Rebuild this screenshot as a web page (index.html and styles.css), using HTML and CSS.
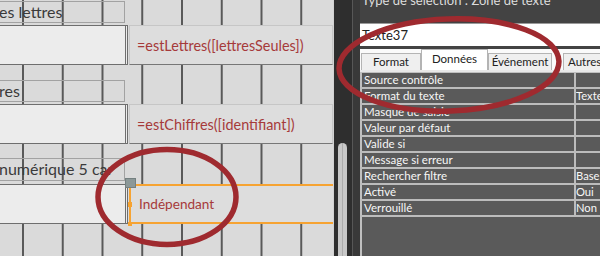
FILE: index.html
```html
<!DOCTYPE html>
<html lang="fr">
<head>
  <meta charset="UTF-8">
  <title>Propriétés - Texte37</title>
  <link rel="stylesheet" href="styles.css">
</head>
<body>

<div class="screen">

  <!-- Form design grid -->
  <div class="form-canvas">
    <div class="ctl-row first">
      <div class="ctl-label">es lettres</div>
      <div class="fields">
        <div class="text-box"></div>
        <div class="calc-box">=estLettres([lettresSeules])</div>
      </div>
    </div>

    <div class="ctl-row second">
      <div class="ctl-label">res</div>
      <div class="fields">
        <div class="text-box"></div>
        <div class="calc-box">=estChiffres([identifiant])</div>
      </div>
    </div>

    <div class="ctl-row third">
      <div class="ctl-label">numérique 5 car</div>
      <div class="fields">
        <div class="text-box"></div>
        <div class="calc-box selected">
          Indépendant
          <span class="handle move"></span>
          <span class="handle mid"></span>
          <span class="handle bottom"></span>
        </div>
      </div>
    </div>
  </div>

  <!-- Splitter with scrollbar -->
  <div class="splitter">
    <div class="track"><div class="thumb"></div></div>
    <div class="split-line"></div>
    <div class="split-rest"></div>
  </div>

  <!-- Property sheet -->
  <div class="props">
    <div class="props-title">Type de sélection : Zone de texte</div>
    <div class="props-name">Texte37</div>
    <div class="tabs">
      <div class="tab format">Format</div>
      <div class="tab active">Données</div>
      <div class="tab event">Événement</div>
      <div class="tab other">Autres</div>
    </div>
    <table class="props-grid">
      <colgroup><col class="name-col"><col></colgroup>
      <tr><td>Source contrôle</td><td></td></tr>
      <tr><td>Format du texte</td><td>Texte</td></tr>
      <tr><td>Masque de saisie</td><td></td></tr>
      <tr><td>Valeur par défaut</td><td></td></tr>
      <tr><td>Valide si</td><td></td></tr>
      <tr><td>Message si erreur</td><td></td></tr>
      <tr><td>Rechercher filtre</td><td>Base</td></tr>
      <tr><td>Activé</td><td>Oui</td></tr>
      <tr><td>Verrouillé</td><td>Non</td></tr>
    </table>
    <div class="props-empty"></div>
  </div>

  <!-- Hand-drawn highlight circles -->
  <svg class="marks" width="600" height="256" viewBox="0 0 600 256">
    <ellipse cx="449" cy="65" rx="110" ry="46" transform="rotate(-2 449 65)"/>
    <ellipse cx="167" cy="197" rx="69" ry="47.5"/>
  </svg>

</div>

</body>
</html>
```

FILE: styles.css
```css
body { margin: 0; width: 600px; height: 256px; overflow: hidden; background: #dadada; font-family: Lato, "Open Sans", sans-serif; }
.screen { display: flex; height: 256px; position: relative; }

/* form grid */
.form-canvas {
  width: 333px; flex: none; overflow: hidden;
  border-right: 1px solid #d2d2d2;
  background-color: #dadada;
  background-image: linear-gradient(to right, #595959 0, #595959 2px, transparent 2px);
  background-size: 39.75px 100%;
  background-position: 22px 0;
}
.ctl-row.first { margin-top: 1px; }
.ctl-row.second { margin-top: 15px; }
.ctl-row.third { margin-top: 14px; }
.ctl-label {
  width: 125px; height: 22px; box-sizing: border-box;
  border: 1px solid #a2a2a2; border-left: none;
  font-size: 16px; line-height: 20px; color: #3a3a3a;
  white-space: nowrap; overflow: hidden; text-indent: -1px;
}
.third .ctl-label { height: 23px; }
.fields { display: flex; height: 40px; margin-top: 2px; }
.third .fields { margin-top: 3px; }
.text-box {
  width: 128px; box-sizing: border-box; background: #ececec;
  border-top: 1px solid #6e6e6e; border-bottom: 1px solid #6e6e6e;
  border-right: 3px double #6e6e6e;
}
.calc-box {
  flex: 1; margin-left: 1px; position: relative;
  display: flex; align-items: center; padding-left: 7px;
  background: #dddddd; border: 1px solid #c6c6c6; border-bottom-color: #777;
  color: #a63a3a; font-size: 14.4px; white-space: nowrap;
}
.calc-box.selected {
  border: 2px solid #f6a332; border-right: none; padding-left: 8px; font-size: 13.6px;
}
.handle { position: absolute; }
.handle.move { left: -6px; top: -8px; width: 9px; height: 8px; background: #8c9898; border: 1px solid #748080; }
.handle.mid { left: -3px; top: 16px; width: 4px; height: 5px; background: #f6a332; }
.handle.bottom { left: -3px; bottom: -4px; width: 4px; height: 4px; background: #f6a332; }

/* splitter */
.splitter { width: 26px; flex: none; display: flex; background: #2e2e2e; }
.track { width: 18px; padding-top: 143px; box-sizing: border-box; }
.thumb {
  margin-left: 4px; width: 9px; height: 113px; border-radius: 5px 5px 0 0;
  background: #c8c8c8 linear-gradient(to right, transparent 4px, #ababab 4px, #ababab 5px, transparent 5px);
}
.split-line { width: 1px; background: #575757; }
.split-rest { width: 7px; background: #393939; }

/* property sheet */
.props { flex: 1; min-width: 0; background: #434343; display: flex; flex-direction: column; font-family: Lato, "Open Sans", sans-serif; }
.props-title { margin-top: -8px; height: 31px; padding-left: 2px; font-size: 13px; line-height: 16px; color: #dcdcdc; white-space: nowrap; }
.props-name { height: 23px; box-sizing: border-box; background: #fff; border-top: 1px solid #9a9a9a; padding-left: 2px; font-size: 13px; line-height: 22px; color: #222; }
.tabs { margin-top: 3px; height: 21px; background: #fafafa; display: flex; align-items: flex-end; padding-left: 1px; border-bottom: 2px solid #e8e8e8; }
.tab {
  flex: none; height: 17px; box-sizing: border-box; text-align: center;
  background: #efefef; border: 1px solid #b4b4b4; border-bottom: none;
  font-size: 11.5px; line-height: 16px; color: #222;
}
.tab.format { width: 60px; }
.tab.active { width: 67px; height: 21px; background: #fff; padding-top: 1px; }
.tab.event { width: 64px; }
.tab.other { width: 60px; margin-left: 11px; text-align: left; padding-left: 4px; }
.props-grid { width: 100%; table-layout: fixed; border-collapse: collapse; border-left: 2px solid #c0c0c0; border-top: 1px solid #c0c0c0; }
.props-grid .name-col { width: 214px; }
.props-grid td {
  height: 14px; padding: 0 0 0 2px; background: #5a5a5a; overflow: hidden;
  border-bottom: 2px solid #bcbcbc; color: #f7f7f7; font-size: 11.5px; line-height: 14px; white-space: nowrap;
}
.props-grid td:first-child { border-right: 2px solid #bcbcbc; }
.props-grid td + td { padding-left: 0; font-size: 11.2px; }
.props-empty { flex: 1; background: #5a5a5a; border-left: 2px solid #c0c0c0; }

/* overlay */
.marks { position: absolute; left: 0; top: 0; pointer-events: none; }
.marks ellipse { fill: none; stroke: #9f2a2f; stroke-width: 5.5; }
```
